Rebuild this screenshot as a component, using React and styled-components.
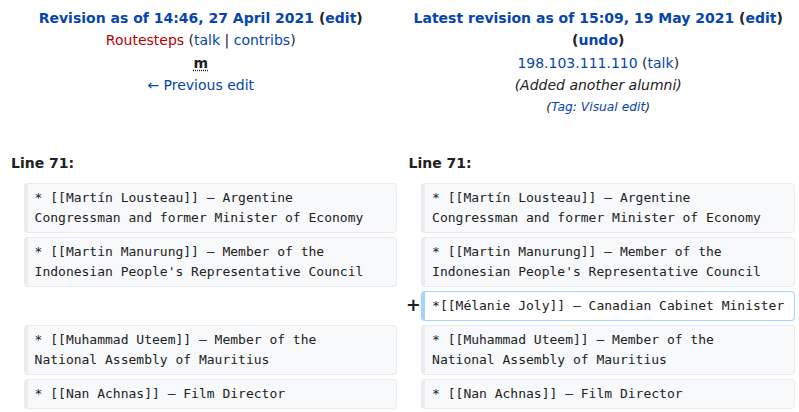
import React from 'react';
import styled, { createGlobalStyle } from 'styled-components';

const GlobalStyle = createGlobalStyle`
  body {
    margin: 0;
    background: #fff;
    color: #202122;
    font-family: "DejaVu Sans", sans-serif;
    font-size: 14px;
  }
`;

const DiffGrid = styled.div`
  display: grid;
  grid-template-columns: minmax(0, 2fr) minmax(0, 48fr) minmax(0, 2fr) minmax(0, 48fr);
  gap: 4px;
  padding: 4px;
`;

const TitleCell = styled.div`
  grid-column: span 2;
  text-align: center;
  line-height: 22.4px;
  padding: 3px 7px 4px;
`;

const TitleLine = styled.div`
  font-weight: bold;
`;

const Link = styled.a`
  color: ${(p) => (p.$red ? '#ba0000' : '#0645ad')};
  text-decoration: none;
  cursor: pointer;
`;

const Minor = styled.abbr`
  font-weight: bold;
  text-decoration: underline dotted;
  text-underline-offset: 2px;
`;

const Comment = styled.div`
  font-style: italic;
`;

const Tags = styled.div`
  font-style: italic;
  font-size: 12.3px;
  line-height: 21px;
`;

const LineNo = styled.div`
  grid-column: span 2;
  font-weight: bold;
  line-height: 22px;
  padding: 26px 7px 5px;
`;

const Marker = styled.div`
  font-size: 17.5px;
  font-weight: bold;
  line-height: 1.2;
  padding: 4.4px;
  text-align: right;
  white-space: nowrap;
`;

const Empty = styled.div`
  grid-column: span 2;
`;

const Content = styled.div`
  font-family: "DejaVu Sans Mono", monospace;
  font-size: 13px;
  line-height: 20px;
  color: #202122;
  white-space: pre;
  overflow: hidden;
  padding: 4px 6px 4px 7px;
  border: 1px solid ${(p) => (p.$added ? '#a3d3ff' : '#eaecf0')};
  border-left-width: 4px;
  border-radius: 4px;
  background: ${(p) => (p.$added ? '#fff' : '#f8f9fa')};
`;

const rows = [
  { text: ['* [[Martín Lousteau]] – Argentine', 'Congressman and former Minister of Economy'] },
  { text: ['* [[Martin Manurung]] – Member of the', "Indonesian People's Representative Council"] },
  { added: true, text: ['*[[Mélanie Joly]] – Canadian Cabinet Minister'] },
  { text: ['* [[Muhammad Uteem]] – Member of the', 'National Assembly of Mauritius'] },
  { text: ['* [[Nan Achnas]] – Film Director'] },
];

export default function App() {
  return (
    <>
      <GlobalStyle />
      <DiffGrid>
        <TitleCell>
          <TitleLine>
            <Link>Revision as of 14:46, 27 April 2021</Link> (<Link>edit</Link>)
          </TitleLine>
          <div>
            <Link $red>Routesteps</Link> (<Link>talk</Link> | <Link>contribs</Link>)
          </div>
          <div>
            <Minor title="This is a minor edit">m</Minor>
          </div>
          <div>
            <Link>← Previous edit</Link>
          </div>
        </TitleCell>
        <TitleCell>
          <TitleLine>
            <Link>Latest revision as of 15:09, 19 May 2021</Link> (<Link>edit</Link>) (<Link>undo</Link>)
          </TitleLine>
          <div>
            <Link>198.103.111.110</Link> (<Link>talk</Link>)
          </div>
          <Comment>(Added another alumni)</Comment>
          <Tags>
            (<Link>Tag</Link>: <Link>Visual edit</Link>)
          </Tags>
        </TitleCell>

        <LineNo>Line 71:</LineNo>
        <LineNo>Line 71:</LineNo>

        {rows.map((row, i) =>
          row.added ? (
            <React.Fragment key={i}>
              <Empty />
              <Marker>+</Marker>
              <Content $added>{row.text.join('\n')}</Content>
            </React.Fragment>
          ) : (
            <React.Fragment key={i}>
              <Marker />
              <Content>{row.text.join('\n')}</Content>
              <Marker />
              <Content>{row.text.join('\n')}</Content>
            </React.Fragment>
          )
        )}
      </DiffGrid>
    </>
  );
}
